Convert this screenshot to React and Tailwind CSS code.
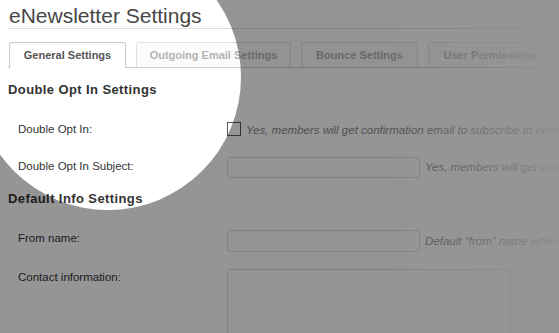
export default function App() {
  const tabs = [
    { label: "General Settings", w: "w-[117px]", active: true },
    { label: "Outgoing Email Settings", w: "w-[155px]" },
    { label: "Bounce Settings", w: "w-[117px]" },
    { label: "User Permissions", w: "w-[124px]" },
  ];

  return (
    <div className="relative h-[333px] w-[559px] overflow-hidden bg-white font-['Liberation_Sans',Arial,sans-serif]">
      <div className="pl-2">
        {/* Title */}
        <h1 className="border-b border-[#dedede] pt-1 pl-px text-[21px] leading-[24px] text-[#464646]">
          eNewsletter Settings
        </h1>

        {/* Tabs */}
        <nav className="mt-[13px] flex h-[26px] items-end gap-[10px] border-b border-[#cccccc] pl-px">
          {tabs.map((tab) => (
            <div
              key={tab.label}
              className={`flex shrink-0 items-center justify-center whitespace-nowrap rounded-t-[3px] border border-b-0 text-[11px] font-bold ${tab.w} ${
                tab.active
                  ? "relative -mb-px h-[26px] border-[#cccccc] bg-white pb-px text-[#555555]"
                  : "h-[25px] border-[#e0e0e0] bg-[#fcfcfc] text-[#b3b3b3]"
              }`}
            >
              {tab.label}
            </div>
          ))}
        </nav>

        {/* Double opt in */}
        <h2 className="mt-[14px] text-[13px] font-bold leading-[16px] tracking-[0.4px] text-[#333333]">
          Double Opt In Settings
        </h2>

        <div className="mt-[24px] flex items-start text-[11.5px] leading-[14px]">
          <label className="w-[219px] shrink-0 pl-[10px] text-[#333333]">
            Double Opt In:
          </label>
          <span className="h-[14px] w-[14px] shrink-0 border border-[#5a5a5a] bg-white" />
          <span className="ml-[5px] whitespace-nowrap pt-px italic text-[#8a8a8a]">
            Yes, members will get confirmation email to subscribe to newsletters.
          </span>
        </div>

        <div className="mt-[20px] flex items-start text-[11.5px] leading-[14px]">
          <label className="w-[219px] shrink-0 pt-[2px] pl-[10px] text-[#333333]">
            Double Opt In Subject:
          </label>
          <div className="h-[21px] w-[193px] shrink-0 rounded-[3px] border border-[#dddddd] bg-white" />
          <span className="ml-[5px] whitespace-nowrap pt-[3px] italic text-[#8a8a8a]">
            Yes, members will get confirmation email to subscribe to newsletters.
          </span>
        </div>

        {/* Default info */}
        <h2 className="mt-[13px] text-[13px] font-bold leading-[16px] tracking-[0.4px] text-[#333333]">
          Default Info Settings
        </h2>

        <div className="mt-[23px] flex items-start text-[11.5px] leading-[14px]">
          <label className="w-[219px] shrink-0 pt-px pl-[10px] text-[#333333]">
            From name:
          </label>
          <div className="h-[22px] w-[193px] shrink-0 rounded-[3px] border border-[#dddddd] bg-white" />
          <span className="ml-[5px] whitespace-nowrap pt-[4px] italic text-[#8a8a8a]">
            Default "from" name when sending newsletters.
          </span>
        </div>

        <div className="mt-[17px] flex items-start text-[11.5px] leading-[14px]">
          <label className="w-[219px] shrink-0 pt-px pl-[10px] text-[#333333]">
            Contact information:
          </label>
          <div className="h-[110px] w-[284px] shrink-0 rounded-[3px] border border-[#dddddd] bg-white" />
        </div>
      </div>

      {/* right side fade */}
      <div className="pointer-events-none absolute inset-y-0 right-0 w-[170px] bg-gradient-to-r from-white/0 to-white/85" />

      {/* spotlight overlay */}
      <div className="pointer-events-none absolute left-[-25px] top-[-56px] h-[266px] w-[266px] rounded-full shadow-[0_0_0_2000px_rgba(0,0,0,0.415)]" />
    </div>
  );
}
